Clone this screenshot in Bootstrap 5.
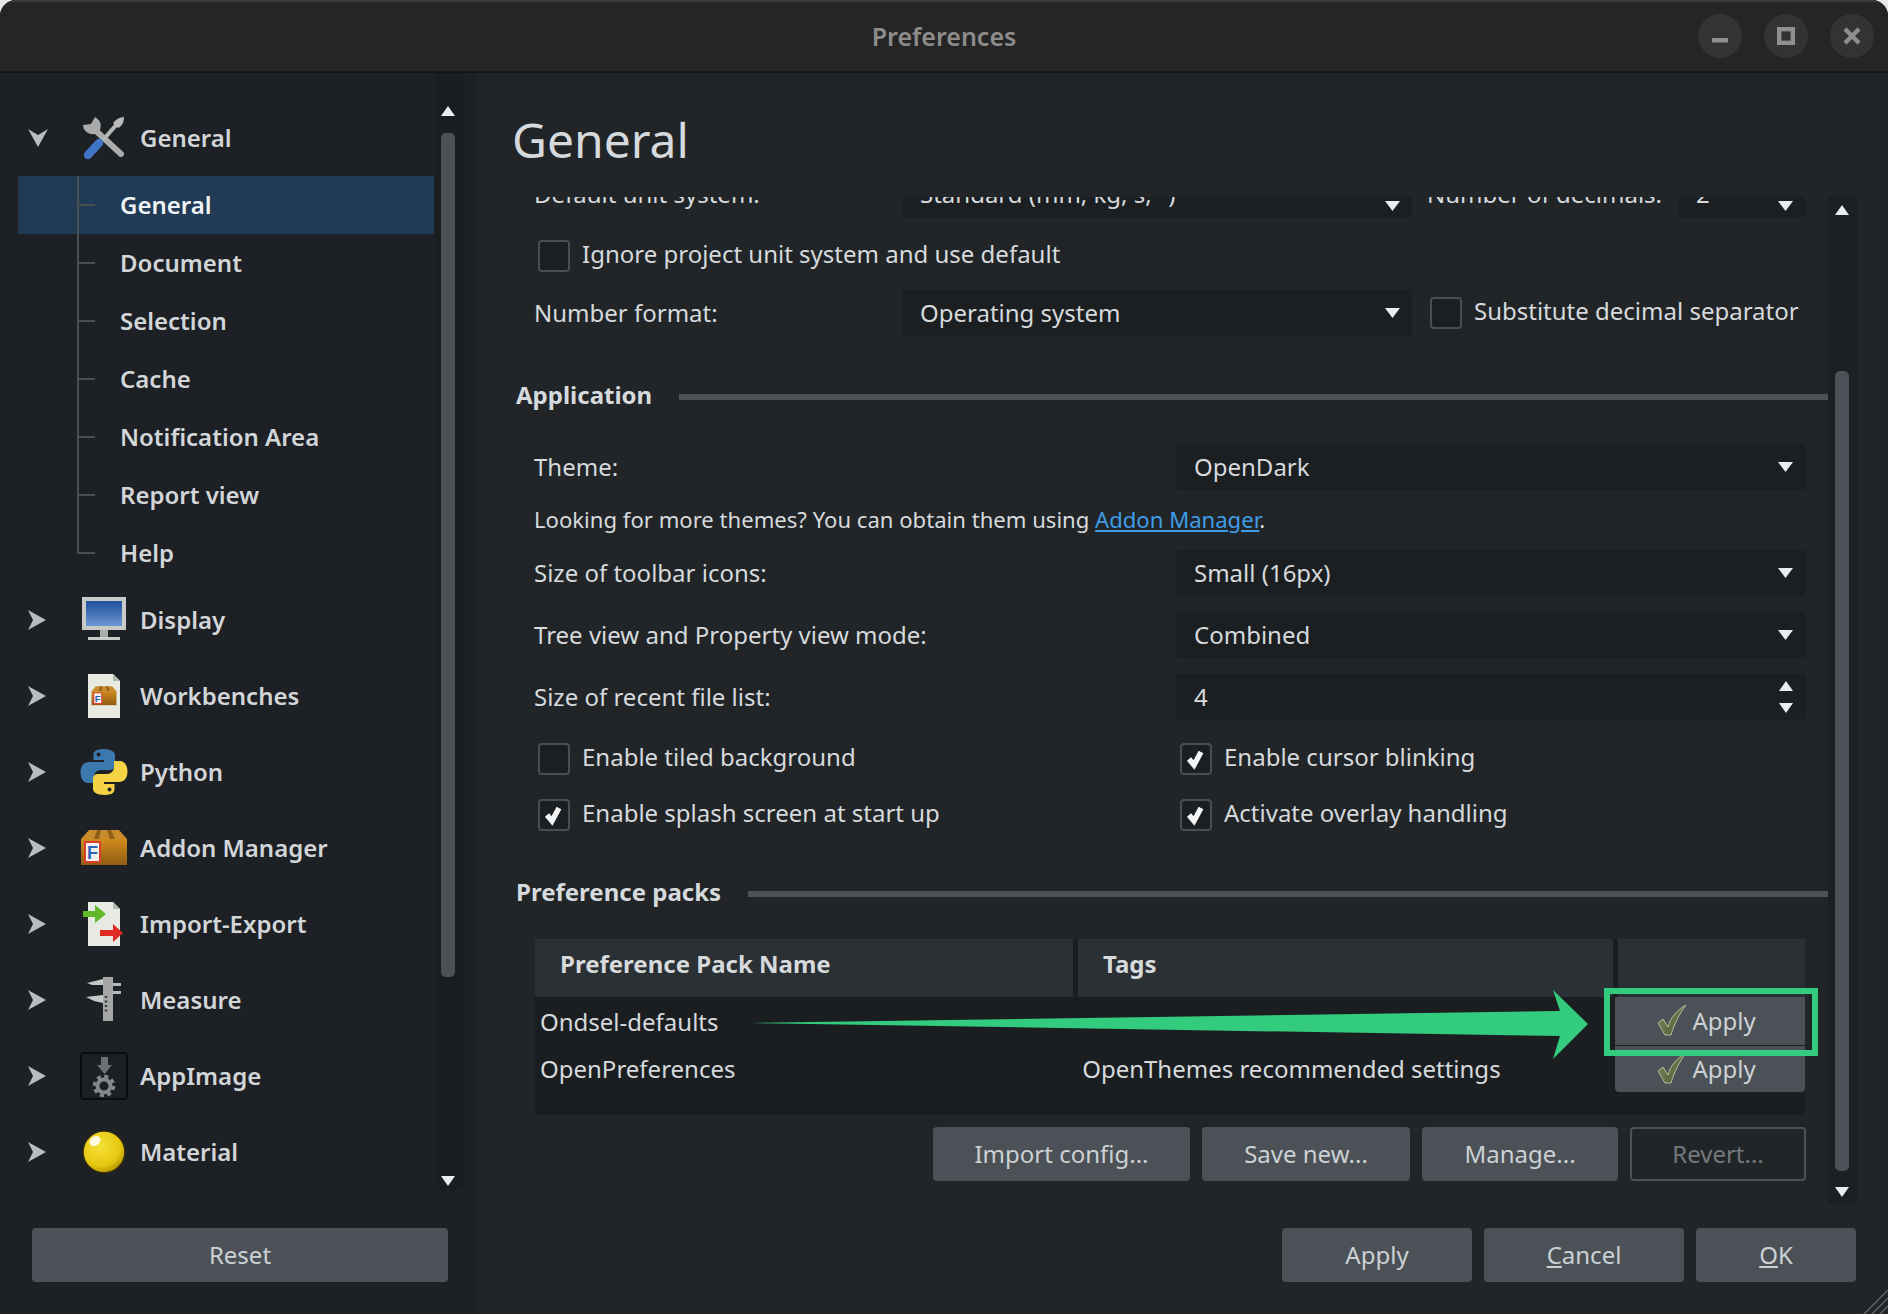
<!DOCTYPE html>
<html lang="en">
<head>
  <meta charset="UTF-8" />
  <title>Preferences</title>
  <link href="https://cdn.jsdelivr.net/npm/bootstrap@5.3.0/dist/css/bootstrap.min.css" rel="stylesheet" />
  <style>
    html, body { background: #e9e9e9; margin: 0; height: 1314px; overflow: hidden; }
    body { font-family: "Noto Sans", "Open Sans", sans-serif; font-size: 24px; color: #d6dadd; }
    .app-window {
      width: 1888px; height: 1314px; position: relative; overflow: hidden;
      border-radius: 16px 16px 0 0; background: #212528;
    }
    .title-bar {
      height: 73px; flex: none; background: #252525; border-top: 2px solid #3a3a3a; border-bottom: 2px solid #141516;
      position: relative;
    }
    .title-text { font-size: 25px; font-weight: 600; color: #8c8c8c; line-height: 68px; }
    .win-btns { position: absolute; right: 14px; top: 12px; gap: 22px; }
    .win-btn { width: 44px; height: 44px; border-radius: 50%; background: #333333; }

    /* left tree */
    .side-panel { width: 477px; background: #1d2024; flex: none; }
    .tree-area { height: 1131px; }
    .tree-col { width: 434px; padding-top: 27px; }
    .tree-top { height: 76px; font-weight: 600; color: #d2d6d9; }
    .tree-exp { width: 80px; padding-left: 28px; flex: none; }
    .tree-ico { width: 48px; height: 48px; margin-right: 12px; flex: none; }
    .tree-kid { height: 58px; margin-left: 18px; width: 416px; font-weight: 600; color: #d2d6d9; padding-left: 59px; }
    .tree-kid.is-on { background: #213a55; color: #f0f4f7; }
    .tree-guide {
      width: 27px; margin-right: 16px; align-self: stretch; flex: none;
      border-left: 2px solid #4a4f54;
      background: linear-gradient(#4a4f54, #4a4f54) no-repeat 0 50% / 16px 2px;
    }
    .tree-guide.is-last { align-self: flex-start; height: 30px; background-position: 0 100%; }
    .side-scroll { width: 30px; padding: 33px 0 0 7px; background: #1b1e21; height: 1117px; }
    .tri-up, .tri-down { display: block; width: 0; height: 0; border-left: 7.5px solid transparent; border-right: 7.5px solid transparent; }
    .tri-up { border-bottom: 10px solid #e8edf0; }
    .tri-down { border-top: 10px solid #e8edf0; }
    .side-thumb { width: 14px; height: 844px; margin-top: 17px; margin-bottom: 199px; background: #4b5156; border-radius: 5px; }
    .side-foot { padding: 24px 29px 0 32px; }

    /* buttons */
    .btn.pref-btn {
      height: 54px; background: #4b5156; color: #ccd1d5; border: 0; border-radius: 4px;
      font-size: 24px; line-height: 54px; padding: 0; text-align: center;
    }
    .btn.pref-btn:disabled { background: transparent; border: 2px solid #4b5156; color: #73787c; opacity: 1; line-height: 50px; }

    /* right */
    .main-panel { width: 1411px; }
    .page-head { height: 124px; padding: 27px 0 0 35px; font-size: 48px; line-height: 80px; color: #d6dadd; }
    .scroll-row { height: 1007px; }
    .scroll-body { width: 1351px; overflow: hidden; }
    .scroll-inner { margin-top: -27px; padding-left: 58px; padding-right: 22px; }
    .scroll-track { width: 29px; background: #1c1f23; padding: 8px 7px 0 7px; }
    .main-thumb { height: 800px; margin-top: 156px; margin-bottom: 16px; background: #4b5156; border-radius: 5px; width: 14px; }
    .form-select.pref-sel, .spin-box {
      height: 48px; background-color: #1c1f22; color: #d6dadd; border: 1px solid #1f2326; border-radius: 3px;
      font-size: 24px; padding: 0 36px 0 17px; box-shadow: none;
    }
    .form-select.pref-sel {
      background-image: url("data:image/svg+xml,%3Csvg xmlns='http://www.w3.org/2000/svg' viewBox='0 0 15 10'%3E%3Cpath fill='%23e8edf0' d='M0 0h15L7.5 10z'/%3E%3C/svg%3E");
      background-size: 15px 10px; background-position: right 12px center;
    }
    .form-select.pref-sel.sel-clipped { background-position: right 12px top 30px; }
    .wide-sel { width: 630px; }
    .mid-sel { width: 511px; }
    .lbl-a { width: 368px; margin-left: -1px; }
    .lbl-b { margin-left: -1px; }
    .lbl-c { margin-left: 14px; }
    .form-check-input.pref-chk {
      width: 32px; height: 32px; margin: 0 12px 0 3px; background-color: #1c1f22; border: 2px solid #484e53; border-radius: 4px; flex: none; float: none;
    }
    .form-check-input.pref-chk:checked {
      background-color: #1c1f22; border-color: #484e53;
      background-image: url("data:image/svg+xml,%3Csvg xmlns='http://www.w3.org/2000/svg' viewBox='0 0 32 32'%3E%3Cpath fill='none' stroke='%23f2f4f5' stroke-width='5.4' d='M9 16l5 6 7-13'/%3E%3C/svg%3E");
      background-size: 32px 32px;
    }
    .form-check-input.pref-chk.chk-gap { margin-left: 17px; }
    .chk-row { height: 32px; }
    .chk-left { width: 642px; }
    .chk-txt { padding-bottom: 4px; }
    .grp-head { height: 32px; margin-left: -19px; margin-right: -22px; font-weight: 700; gap: 27px; }
    .grp-line { height: 6px; background: #4c5257; flex-grow: 1; margin-top: 4px; }
    .more-line { height: 30px; line-height: 30px; font-size: 22.1px; margin-left: -1px; }
    .more-line a { color: #3f9ce6; }
    .pack-table { height: 176px; width: 1270px; background: #1b1e21; border-radius: 3px; }
    .pack-head { height: 58px; gap: 5px; font-weight: 700; }
    .pack-head > div { background: #2b3034; padding-left: 25px; line-height: 50px; height: 58px; }
    .pack-c1 { width: 538px; }
    .pack-c2 { width: 535px; }
    .pack-c3 { width: 187px; }
    .pack-row { height: 48px; }
    .pack-name { width: 544px; padding-left: 5px; }
    .pack-first { padding-top: 2px; }
    .pack-tags { width: 538px; padding-left: 4px; }
    .btn.apply-btn { width: 190px; height: 48px; line-height: 46px; border-radius: 0; margin-left: 0; }
    .pack-row:last-child .btn.apply-btn { border-radius: 0 0 4px 4px; height: 46px; }
    .apply-chk { width: 30px; height: 32px; vertical-align: -6px; margin-right: 6px; margin-left: -8px; }
    .pack-btns { gap: 12px; margin-top: 12px; }
    .foot-bar { height: 110px; padding: 24px 32px 0 0; gap: 12px; position: relative; }
    .over-mark { position: absolute; left: 0; top: 0; pointer-events: none; }
    .grip { position: absolute; right: 0; bottom: 0; }
  </style>
</head>
<body>
<svg width="0" height="0" style="position:absolute">
  <defs>
    <linearGradient id="boxFront" x1="0" y1="0" x2="0" y2="1"><stop offset="0" stop-color="#d08b1e"/><stop offset="1" stop-color="#8f5c12"/></linearGradient>
    <linearGradient id="screenBlue" x1="0" y1="0" x2="0" y2="1"><stop offset="0" stop-color="#1f4f9e"/><stop offset="1" stop-color="#6d98d4"/></linearGradient>
    <linearGradient id="tickFill" x1="0" y1="0" x2="1" y2="1"><stop offset="0" stop-color="#7f8c5c"/><stop offset="1" stop-color="#4d5a32"/></linearGradient>
    <radialGradient id="ballFill" cx=".4" cy=".35" r=".7"><stop offset="0" stop-color="#f7e23a"/><stop offset=".7" stop-color="#e6c60e"/><stop offset="1" stop-color="#a98c05"/></radialGradient>
    <symbol id="pkg" viewBox="0 0 48 48">
      <path fill="#c98c2c" d="M1 15 9 6h30l8 9z"/>
      <path fill="#8f5f18" d="M17 6h4l-2 9h-5zM27 6h4l4 9h-5z"/>
      <rect x="1" y="15" width="46" height="26" fill="url(#boxFront)"/>
      <rect x="5" y="18" width="15" height="20" fill="#f3f1ec" stroke="#d8402c" stroke-width="2"/>
      <text x="12.500" y="35" text-anchor="middle" font-family="Liberation Sans, sans-serif" font-weight="700" font-size="18" fill="#2b62b5">F</text>
    </symbol>
    <symbol id="tickmark" viewBox="0 0 30 32">
      <path fill="url(#tickFill)" stroke="#b5bba0" stroke-width="1" d="M1 19l5-4 5 8C13 14 20 6 29 1 23 9 17 20 14 31H8z"/>
    </symbol>
  </defs>
</svg>

<div class="app-window d-flex flex-column">
  <div class="title-bar text-center">
    <span class="title-text">Preferences</span>
    <div class="win-btns d-flex">
      <div class="win-btn d-flex align-items-center justify-content-center">
        <svg width="20" height="20" viewBox="0 0 20 20"><rect x="2" y="12" width="16" height="4.500" fill="#8f8f8f"/></svg>
      </div>
      <div class="win-btn d-flex align-items-center justify-content-center">
        <svg width="18" height="18" viewBox="0 0 18 18"><rect x="2.200" y="2.200" width="13.600" height="13.600" fill="none" stroke="#8f8f8f" stroke-width="4.400"/></svg>
      </div>
      <div class="win-btn d-flex align-items-center justify-content-center">
        <svg width="20" height="20" viewBox="0 0 20 20"><path d="M3 3l14 14M17 3 3 17" stroke="#8f8f8f" stroke-width="4.400"/></svg>
      </div>
    </div>
  </div>

  <div class="d-flex flex-grow-1">
    <div class="side-panel d-flex flex-column">
      <div class="tree-area d-flex">
        <div class="tree-col">
          <div class="tree-top d-flex align-items-center">
            <div class="tree-exp"><svg width="20" height="18" viewBox="0 0 20 18" class="d-block"><path fill="#b9bdbf" d="M0 0l10 6 10-6-10 18z"/></svg></div>
            <svg class="tree-ico" viewBox="0 0 48 48">
              <path stroke="#a9acaa" stroke-width="6" stroke-linecap="round" d="M15 16l26 24"/>
              <path fill="#a9acaa" d="M15 3l-4 7-8 1c0 6 6 10 12 9l5-4c2-6 0-10-5-13z"/>
              <path stroke="#b4b6b3" stroke-width="4" d="M37 10 23 26"/>
              <path fill="#b9bbb8" d="M33 9c3-4 7-6 11-6 0 5-2 9-6 11z"/>
              <path stroke="#3f74c6" stroke-width="8.500" stroke-linecap="round" d="M19 29 8 41"/>
            </svg>
            <span>General</span>
          </div>
          <div class="tree-kid is-on d-flex align-items-center"><span class="tree-guide"></span><span>General</span></div>
          <div class="tree-kid d-flex align-items-center"><span class="tree-guide"></span><span>Document</span></div>
          <div class="tree-kid d-flex align-items-center"><span class="tree-guide"></span><span>Selection</span></div>
          <div class="tree-kid d-flex align-items-center"><span class="tree-guide"></span><span>Cache</span></div>
          <div class="tree-kid d-flex align-items-center"><span class="tree-guide"></span><span>Notification Area</span></div>
          <div class="tree-kid d-flex align-items-center"><span class="tree-guide"></span><span>Report view</span></div>
          <div class="tree-kid d-flex align-items-center"><span class="tree-guide is-last"></span><span>Help</span></div>

          <div class="tree-top d-flex align-items-center">
            <div class="tree-exp"><svg width="18" height="20" viewBox="0 0 18 20" class="d-block"><path fill="#b9bdbf" d="M0 0l18 10L0 20l5-10z"/></svg></div>
            <svg class="tree-ico" viewBox="0 0 48 48">
              <rect x="2" y="1" width="44" height="33" fill="#c8cbc7"/>
              <rect x="6" y="5" width="36" height="25" fill="url(#screenBlue)"/>
              <rect x="20" y="34" width="8" height="7" fill="#a9adaa"/>
              <rect x="8" y="41" width="32" height="3" fill="#c8cbc7"/>
            </svg>
            <span>Display</span>
          </div>
          <div class="tree-top d-flex align-items-center">
            <div class="tree-exp"><svg width="18" height="20" viewBox="0 0 18 20" class="d-block"><path fill="#b9bdbf" d="M0 0l18 10L0 20l5-10z"/></svg></div>
            <svg class="tree-ico" viewBox="0 0 48 48">
              <path fill="#e7eae2" d="M8 2h25l7 7v37H8z"/>
              <path fill="#b4b8b2" d="M33 2l7 7h-7z"/>
              <use href="#pkg" x="11" y="11" width="26" height="26"/>
            </svg>
            <span>Workbenches</span>
          </div>
          <div class="tree-top d-flex align-items-center">
            <div class="tree-exp"><svg width="18" height="20" viewBox="0 0 18 20" class="d-block"><path fill="#b9bdbf" d="M0 0l18 10L0 20l5-10z"/></svg></div>
            <svg class="tree-ico" viewBox="0 0 48 48">
              <path fill="#3b78ae" d="M23.500 1C14 1 13.500 5 13.500 7v5H24v2H9C4 14 .5 18 .5 24.500S4 35 8 35h6v-6c0-4 3-7 7-7h9c3 0 5-2 5-5V7c0-3-4-6-11.500-6z"/>
              <circle cx="18.500" cy="6.500" r="2" fill="#1d2024"/>
              <g transform="rotate(180 24 24)">
                <path fill="#f4d345" d="M23.500 1C14 1 13.500 5 13.500 7v5H24v2H9C4 14 .5 18 .5 24.500S4 35 8 35h6v-6c0-4 3-7 7-7h9c3 0 5-2 5-5V7c0-3-4-6-11.500-6z"/>
                <circle cx="18.500" cy="6.500" r="2" fill="#1d2024"/>
              </g>
            </svg>
            <span>Python</span>
          </div>
          <div class="tree-top d-flex align-items-center">
            <div class="tree-exp"><svg width="18" height="20" viewBox="0 0 18 20" class="d-block"><path fill="#b9bdbf" d="M0 0l18 10L0 20l5-10z"/></svg></div>
            <svg class="tree-ico" viewBox="0 0 48 48"><use href="#pkg" width="48" height="48"/></svg>
            <span>Addon Manager</span>
          </div>
          <div class="tree-top d-flex align-items-center">
            <div class="tree-exp"><svg width="18" height="20" viewBox="0 0 18 20" class="d-block"><path fill="#b9bdbf" d="M0 0l18 10L0 20l5-10z"/></svg></div>
            <svg class="tree-ico" viewBox="0 0 48 48">
              <path fill="#e7eae2" d="M8 2h25l7 7v37H8z"/>
              <path fill="#b4b8b2" d="M33 2l7 7h-7z"/>
              <path fill="#62b82a" d="M3 11h12V5l11 9-11 9v-6H3z"/>
              <path fill="#df2a22" d="M20 30h13v-6l10 9-10 9v-6H20z"/>
            </svg>
            <span>Import-Export</span>
          </div>
          <div class="tree-top d-flex align-items-center">
            <div class="tree-exp"><svg width="18" height="20" viewBox="0 0 18 20" class="d-block"><path fill="#b9bdbf" d="M0 0l18 10L0 20l5-10z"/></svg></div>
            <svg class="tree-ico" viewBox="0 0 48 48">
              <rect x="23" y="1" width="10" height="44" fill="#a5a8a7"/>
              <path fill="#c5c8c7" d="M7 7l16-4v6H12zM6 21l17-2v8l-9-2z"/>
              <path fill="#b5b8b7" d="M33 7h8v3h-8zM33 15h8v3h-8z"/>
              <path stroke="#3c3f40" stroke-width="2.500" stroke-dasharray="2 2.500" d="M26 20v18"/>
            </svg>
            <span>Measure</span>
          </div>
          <div class="tree-top d-flex align-items-center">
            <div class="tree-exp"><svg width="18" height="20" viewBox="0 0 18 20" class="d-block"><path fill="#b9bdbf" d="M0 0l18 10L0 20l5-10z"/></svg></div>
            <svg class="tree-ico" viewBox="0 0 48 48">
              <rect x="1" y="1" width="46" height="46" rx="3" fill="#1c2022" stroke="#0b0d0e" stroke-width="2"/>
              <path fill="#6f7274" d="M21 5h7v8h4l-7.500 9L17 13h4z"/>
              <circle cx="24" cy="34" r="6.500" fill="none" stroke="#85888a" stroke-width="4"/>
              <circle cx="24" cy="34" r="9.500" fill="none" stroke="#85888a" stroke-width="3.500" stroke-dasharray="4 3.460"/>
            </svg>
            <span>AppImage</span>
          </div>
          <div class="tree-top d-flex align-items-center">
            <div class="tree-exp"><svg width="18" height="20" viewBox="0 0 18 20" class="d-block"><path fill="#b9bdbf" d="M0 0l18 10L0 20l5-10z"/></svg></div>
            <svg class="tree-ico" viewBox="0 0 48 48">
              <circle cx="24" cy="24" r="21" fill="url(#ballFill)" stroke="#2c2a10" stroke-width="1.500"/>
              <ellipse cx="15" cy="13" rx="6" ry="4.500" transform="rotate(-35 15 13)" fill="#fffbe0"/>
            </svg>
            <span>Material</span>
          </div>
        </div>
        <div class="side-scroll">
          <div class="tri-up"></div>
          <div class="side-thumb"></div>
          <div class="tri-down"></div>
        </div>
      </div>
      <div class="side-foot">
        <button class="btn pref-btn w-100" type="button">Reset</button>
      </div>
    </div>

    <div class="main-panel d-flex flex-column">
      <div class="page-head">General</div>
      <div class="scroll-row d-flex">
        <div class="scroll-body">
          <div class="scroll-inner">
            <div class="d-flex align-items-center">
              <span class="lbl-a">Default unit system:</span>
              <select class="form-select pref-sel sel-clipped mid-sel"><option>Standard (mm, kg, s, °)</option></select>
              <span class="flex-grow-1 lbl-c">Number of decimals:</span>
              <select class="form-select pref-sel sel-clipped" style="width:128px"><option>2</option></select>
            </div>
            <div class="chk-row d-flex align-items-center" style="margin-top:22px">
              <input class="form-check-input pref-chk" type="checkbox" />
              <span class="chk-txt">Ignore project unit system and use default</span>
            </div>
            <div class="d-flex align-items-center" style="margin-top:17px">
              <span class="lbl-a">Number format:</span>
              <select class="form-select pref-sel mid-sel"><option>Operating system</option></select>
              <input class="form-check-input pref-chk chk-gap" type="checkbox" />
              <span class="chk-txt">Substitute decimal separator</span>
            </div>

            <div class="grp-head d-flex align-items-center" style="margin-top:42px">
              <span>Application</span><div class="grp-line"></div>
            </div>
            <div class="d-flex align-items-center justify-content-between" style="margin-top:32px">
              <span class="lbl-b">Theme:</span>
              <select class="form-select pref-sel wide-sel"><option>OpenDark</option></select>
            </div>
            <div class="more-line" style="margin-top:13px">Looking for more themes? You can obtain them using <a href="#">Addon Manager</a>.</div>
            <div class="d-flex align-items-center justify-content-between" style="margin-top:15px">
              <span class="lbl-b">Size of toolbar icons:</span>
              <select class="form-select pref-sel wide-sel"><option>Small (16px)</option></select>
            </div>
            <div class="d-flex align-items-center justify-content-between" style="margin-top:14px">
              <span class="lbl-b">Tree view and Property view mode:</span>
              <select class="form-select pref-sel wide-sel"><option>Combined</option></select>
            </div>
            <div class="d-flex align-items-center justify-content-between" style="margin-top:14px">
              <span class="lbl-b">Size of recent file list:</span>
              <div class="spin-box wide-sel d-flex align-items-center justify-content-between" style="padding-right:12px">
                <span>4</span>
                <span class="d-flex flex-column" style="gap:12px"><span class="tri-up"></span><span class="tri-down"></span></span>
              </div>
            </div>
            <div class="chk-row d-flex align-items-center" style="margin-top:22px">
              <div class="chk-left d-flex align-items-center"><input class="form-check-input pref-chk" type="checkbox" /><span class="chk-txt">Enable tiled background</span></div>
              <div class="d-flex align-items-center"><input class="form-check-input pref-chk" type="checkbox" checked /><span class="chk-txt">Enable cursor blinking</span></div>
            </div>
            <div class="chk-row d-flex align-items-center" style="margin-top:24px">
              <div class="chk-left d-flex align-items-center"><input class="form-check-input pref-chk" type="checkbox" checked /><span class="chk-txt">Enable splash screen at start up</span></div>
              <div class="d-flex align-items-center"><input class="form-check-input pref-chk" type="checkbox" checked /><span class="chk-txt">Activate overlay handling</span></div>
            </div>

            <div class="grp-head d-flex align-items-center" style="margin-top:45px">
              <span>Preference packs</span><div class="grp-line"></div>
            </div>
            <div class="pack-table" style="margin-top:31px">
              <div class="pack-head d-flex">
                <div class="pack-c1">Preference Pack Name</div>
                <div class="pack-c2">Tags</div>
                <div class="pack-c3"></div>
              </div>
              <div class="pack-row d-flex align-items-center">
                <span class="pack-name pack-first">Ondsel-defaults</span><span class="pack-tags"></span>
                <button class="btn pref-btn apply-btn" type="button"><svg class="apply-chk"><use href="#tickmark"/></svg>Apply</button>
              </div>
              <div class="pack-row d-flex align-items-center">
                <span class="pack-name">OpenPreferences</span><span class="pack-tags">OpenThemes recommended settings</span>
                <button class="btn pref-btn apply-btn" type="button"><svg class="apply-chk"><use href="#tickmark"/></svg>Apply</button>
              </div>
            </div>
            <div class="pack-btns d-flex justify-content-end">
              <button class="btn pref-btn" style="width:257px" type="button">Import config...</button>
              <button class="btn pref-btn" style="width:208px" type="button">Save new...</button>
              <button class="btn pref-btn" style="width:196px" type="button">Manage...</button>
              <button class="btn pref-btn" style="width:176px" type="button" disabled>Revert...</button>
            </div>
          </div>
        </div>
        <div class="scroll-track">
          <div class="tri-up"></div>
          <div class="main-thumb"></div>
          <div class="tri-down"></div>
        </div>
      </div>
      <div class="foot-bar d-flex justify-content-end">
        <button class="btn pref-btn" style="width:190px" type="button">Apply</button>
        <button class="btn pref-btn" style="width:200px" type="button"><u>C</u>ancel</button>
        <button class="btn pref-btn" style="width:160px" type="button"><u>O</u>K</button>
        <svg class="grip" width="26" height="26" viewBox="0 0 26 26"><path stroke="#5c6166" stroke-width="1.500" d="M2 26 26 2M10 26 26 10M18 26l8-8"/></svg>
      </div>
    </div>
  </div>

  <!-- annotation drawn on top of the dialog -->
  <svg class="over-mark" width="1888" height="1314" viewBox="0 0 1888 1314">
    <path fill="#33cc7e" d="M750 1023 1560 1011 1553 990 1588 1024 1553 1059 1560 1036z"/>
    <rect x="1607" y="991" width="208" height="62" fill="none" stroke="#33cc7e" stroke-width="6"/>
  </svg>
</div>

<script src="https://cdn.jsdelivr.net/npm/bootstrap@5.3.0/dist/js/bootstrap.bundle.min.js"></script>
</body>
</html>
